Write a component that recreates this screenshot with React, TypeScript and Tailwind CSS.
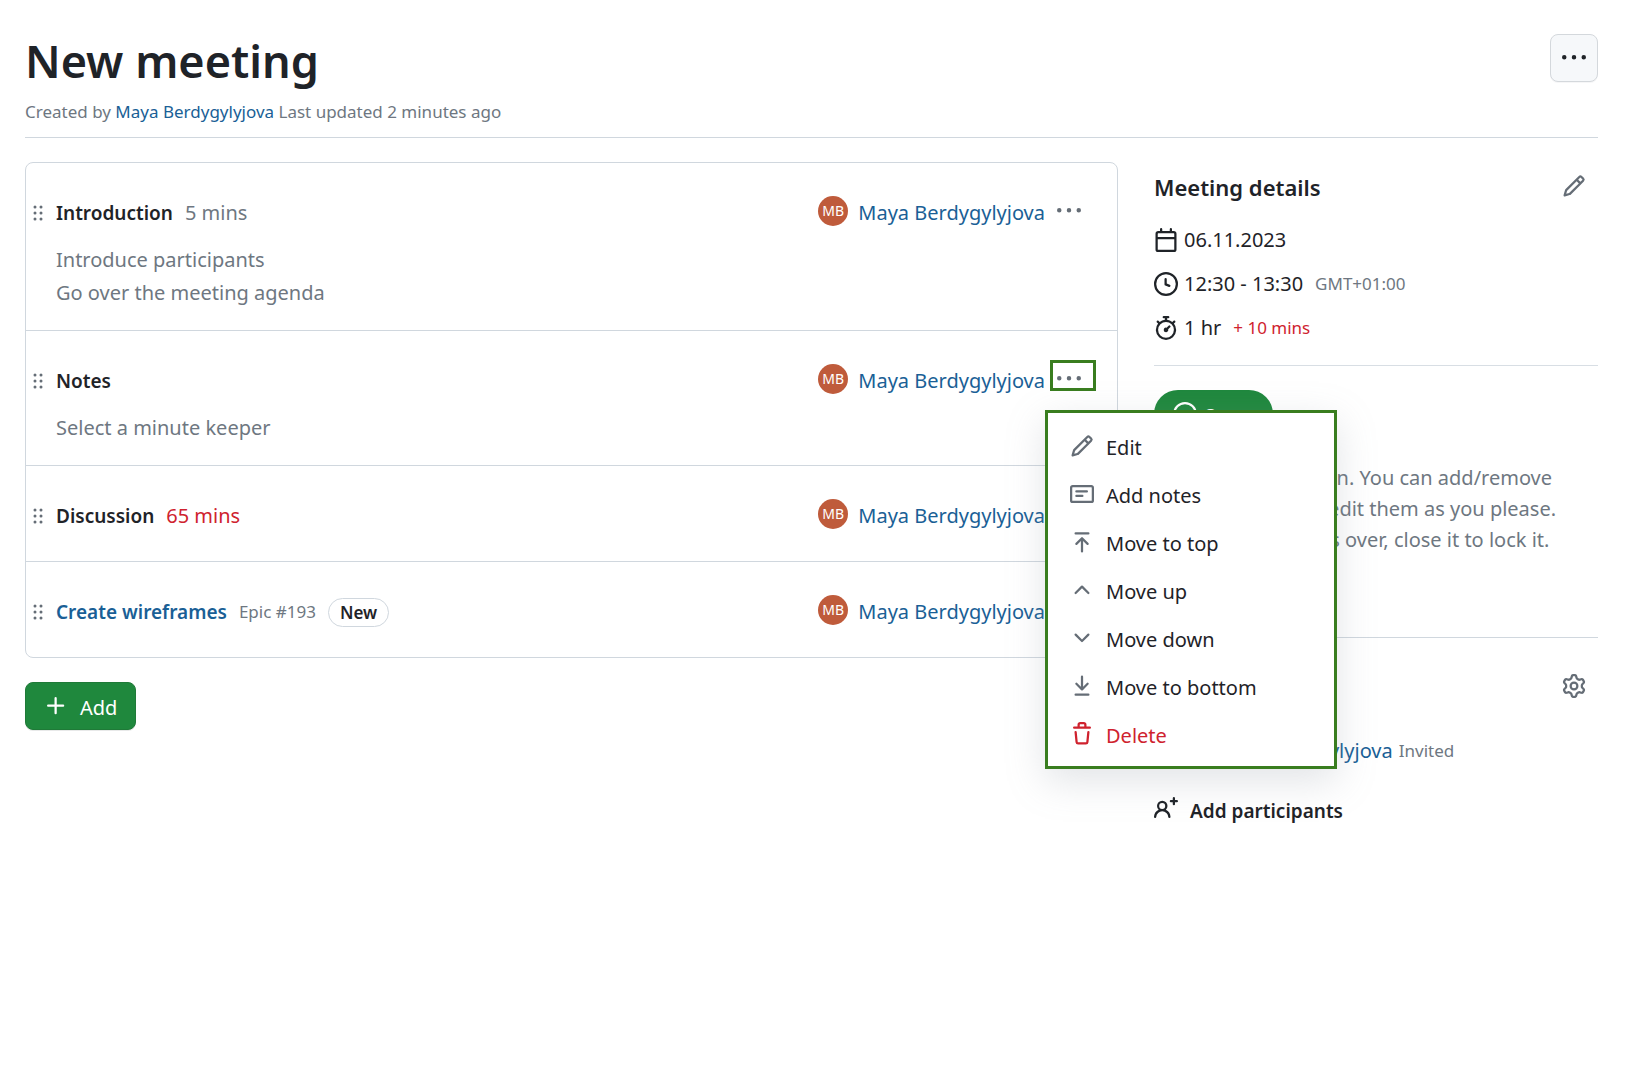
import React from "react";

const PATHS = {
  pencil:
    "M11.013 1.427a1.75 1.75 0 0 1 2.474 0l1.086 1.086a1.75 1.75 0 0 1 0 2.474l-8.61 8.61c-.21.21-.47.364-.756.445l-3.251.93a.75.75 0 0 1-.927-.928l.929-3.25c.081-.286.235-.547.445-.758l8.61-8.61Zm.176 4.823L9.75 4.81l-6.286 6.287a.253.253 0 0 0-.064.108l-.558 1.953 1.953-.558a.253.253 0 0 0 .108-.064Zm1.238-3.763a.25.25 0 0 0-.354 0L10.811 3.75l1.439 1.44 1.263-1.263a.25.25 0 0 0 0-.354Z",
  note: "M0 3.75C0 2.784.784 2 1.75 2h12.5c.966 0 1.75.784 1.75 1.75v8.5A1.75 1.75 0 0 1 14.25 14H1.75A1.75 1.75 0 0 1 0 12.25Zm1.75-.25a.25.25 0 0 0-.25.25v8.5c0 .138.112.25.25.25h12.5a.25.25 0 0 0 .25-.25v-8.5a.25.25 0 0 0-.25-.25ZM3.5 6.25a.75.75 0 0 1 .75-.75h7a.75.75 0 0 1 0 1.5h-7a.75.75 0 0 1-.75-.75Zm.75 2.25h4a.75.75 0 0 1 0 1.5h-4a.75.75 0 0 1 0-1.5Z",
  moveTop:
    "M3 2.25a.75.75 0 0 1 .75-.75h8.5a.75.75 0 0 1 0 1.5h-8.5A.75.75 0 0 1 3 2.25Zm5.53 2.72 3.75 3.75a.749.749 0 1 1-1.06 1.06L8.75 7.311v6.939a.75.75 0 0 1-1.5 0V7.311L4.78 9.78a.749.749 0 1 1-1.06-1.06l3.75-3.75a.749.749 0 0 1 1.06 0Z",
  moveBottom:
    "M7.47 10.78a.749.749 0 0 0 1.06 0l3.75-3.75a.749.749 0 1 0-1.06-1.06L8.75 8.439V1.75a.75.75 0 0 0-1.5 0v6.689L4.78 5.97a.749.749 0 1 0-1.06 1.06l3.75 3.75ZM3.75 13a.75.75 0 0 0 0 1.5h8.5a.75.75 0 0 0 0-1.5h-8.5Z",
  up: "M3.22 10.53a.749.749 0 0 1 0-1.06l4.25-4.25a.749.749 0 0 1 1.06 0l4.25 4.25a.749.749 0 1 1-1.06 1.06L8 6.811 4.28 10.53a.749.749 0 0 1-1.06 0Z",
  down: "M12.78 5.22a.749.749 0 0 1 0 1.06l-4.25 4.25a.749.749 0 0 1-1.06 0L3.22 6.28a.749.749 0 1 1 1.06-1.06L8 8.939l3.72-3.719a.749.749 0 0 1 1.06 0Z",
  trash:
    "M11 1.75V3h2.25a.75.75 0 0 1 0 1.5H2.75a.75.75 0 0 1 0-1.5H5V1.75C5 .784 5.784 0 6.75 0h2.5C10.216 0 11 .784 11 1.75ZM4.496 6.675l.66 6.6a.25.25 0 0 0 .249.225h5.19a.25.25 0 0 0 .249-.225l.66-6.6a.75.75 0 0 1 1.492.149l-.66 6.6A1.748 1.748 0 0 1 10.595 15h-5.19a1.75 1.75 0 0 1-1.741-1.575l-.66-6.6a.75.75 0 1 1 1.492-.15ZM6.5 1.75V3h3V1.75a.25.25 0 0 0-.25-.25h-2.5a.25.25 0 0 0-.25.25Z",
  kebab:
    "M8 9a1.5 1.5 0 1 0 0-3 1.5 1.5 0 0 0 0 3ZM1.5 9a1.5 1.5 0 1 0 0-3 1.5 1.5 0 0 0 0 3Zm13 0a1.5 1.5 0 1 0 0-3 1.5 1.5 0 0 0 0 3Z",
  grabber:
    "M10 13a1 1 0 1 1 0-2 1 1 0 0 1 0 2Zm0-4a1 1 0 1 1 0-2 1 1 0 0 1 0 2Zm-4 4a1 1 0 1 1 0-2 1 1 0 0 1 0 2Zm5-9a1 1 0 1 1-2 0 1 1 0 0 1 2 0ZM7 8a1 1 0 1 1-2 0 1 1 0 0 1 2 0ZM6 5a1 1 0 1 1 0-2 1 1 0 0 1 0 2Z",
  gear: "M8 0a8.2 8.2 0 0 1 .701.031C9.444.095 9.99.645 10.16 1.29l.288 1.107c.018.066.079.158.212.224.231.114.454.243.668.386.123.082.233.09.299.071l1.103-.303c.644-.176 1.392.021 1.82.63.27.385.506.792.704 1.218.315.675.111 1.422-.364 1.891l-.814.806c-.049.048-.098.147-.088.294.016.257.016.515 0 .772-.01.147.038.246.088.294l.814.806c.475.469.679 1.216.364 1.891a7.977 7.977 0 0 1-.704 1.217c-.428.61-1.176.807-1.82.63l-1.102-.302c-.067-.019-.177-.011-.3.071a5.909 5.909 0 0 1-.668.386c-.133.066-.194.158-.211.224l-.29 1.106c-.168.646-.715 1.196-1.458 1.26a8.006 8.006 0 0 1-1.402 0c-.743-.064-1.289-.614-1.458-1.26l-.289-1.106c-.018-.066-.079-.158-.212-.224a5.738 5.738 0 0 1-.668-.386c-.123-.082-.233-.09-.299-.071l-1.103.303c-.644.176-1.392-.021-1.82-.63a8.12 8.12 0 0 1-.704-1.218c-.315-.675-.111-1.422.363-1.891l.815-.806c.05-.048.098-.147.088-.294a6.214 6.214 0 0 1 0-.772c.01-.147-.038-.246-.088-.294l-.815-.806C.635 6.045.431 5.298.746 4.623a7.92 7.92 0 0 1 .704-1.217c.428-.61 1.176-.807 1.82-.63l1.102.302c.067.019.177.011.3-.071.214-.143.437-.272.668-.386.133-.066.194-.158.211-.224l.29-1.106C6.009.645 6.556.095 7.299.03 7.53.01 7.764 0 8 0Zm-.571 1.525c-.036.003-.108.036-.137.146l-.289 1.105c-.147.561-.549.967-.998 1.189-.173.086-.34.183-.5.29-.417.278-.97.423-1.529.27l-1.103-.303c-.109-.03-.175.016-.195.045-.22.312-.412.644-.573.99-.014.031-.021.11.059.19l.815.806c.411.406.562.957.53 1.456a4.709 4.709 0 0 0 0 .582c.032.499-.119 1.05-.53 1.456l-.815.806c-.081.08-.073.159-.059.19.162.346.353.677.573.989.02.03.085.076.195.046l1.102-.303c.56-.153 1.113-.008 1.53.27.161.107.328.204.501.29.447.222.85.629.997 1.189l.289 1.105c.029.109.101.143.137.146a6.6 6.6 0 0 0 1.142 0c.036-.003.108-.036.137-.146l.289-1.105c.147-.561.549-.967.998-1.189.173-.086.34-.183.5-.29.417-.278.97-.423 1.529-.27l1.103.303c.109.029.175-.016.195-.045.22-.313.411-.644.573-.99.014-.031.021-.11-.059-.19l-.815-.806c-.411-.406-.562-.957-.53-1.456a4.709 4.709 0 0 0 0-.582c-.032-.499.119-1.05.53-1.456l.815-.806c.081-.08.073-.159.059-.19a6.464 6.464 0 0 0-.573-.989c-.02-.03-.085-.076-.195-.046l-1.102.303c-.56.153-1.113.008-1.53-.27a4.44 4.44 0 0 0-.501-.29c-.447-.222-.85-.629-.997-1.189l-.289-1.105c-.029-.11-.101-.143-.137-.146a6.6 6.6 0 0 0-1.142 0ZM11 8a3 3 0 1 1-6 0 3 3 0 0 1 6 0ZM9.5 8a1.5 1.5 0 1 0-3.001.001A1.5 1.5 0 0 0 9.5 8Z",
  calendar:
    "M4.75 0a.75.75 0 0 1 .75.75V2h5V.75a.75.75 0 0 1 1.5 0V2h1.25c.966 0 1.75.784 1.75 1.75v10.5A1.75 1.75 0 0 1 13.25 16H2.75A1.75 1.75 0 0 1 1 14.25V3.75C1 2.784 1.784 2 2.75 2H4V.75A.75.75 0 0 1 4.75 0ZM2.5 7.5v6.75c0 .138.112.25.25.25h10.5a.25.25 0 0 0 .25-.25V7.5Zm10.75-4H2.75a.25.25 0 0 0-.25.25V6h11V3.75a.25.25 0 0 0-.25-.25Z",
  clock:
    "M8 0a8 8 0 1 1 0 16A8 8 0 0 1 8 0ZM1.5 8a6.5 6.5 0 1 0 13 0 6.5 6.5 0 0 0-13 0Zm7-3.25v2.992l2.028.812a.75.75 0 0 1-.557 1.392l-2.5-1A.751.751 0 0 1 7 8.25v-3.5a.75.75 0 0 1 1.5 0Z",
  stopwatch:
    "M5.75.75A.75.75 0 0 1 6.5 0h3a.75.75 0 0 1 0 1.5h-.75v1l-.001.041a6.724 6.724 0 0 1 3.464 1.435l.007-.006.75-.75a.749.749 0 0 1 1.275.326.749.749 0 0 1-.215.734l-.75.75-.006.007a6.75 6.75 0 1 1-10.548 0L2.72 5.03l-.75-.75a.751.751 0 0 1 .018-1.042.751.751 0 0 1 1.042-.018l.75.75.007.006A6.72 6.72 0 0 1 7.25 2.541V1.5H6.5a.75.75 0 0 1-.75-.75ZM8 14.5a5.25 5.25 0 1 0-.001-10.501A5.25 5.25 0 0 0 8 14.5Zm.389-6.7 1.33-1.33a.75.75 0 1 1 1.061 1.06L9.45 8.861A1.503 1.503 0 0 1 8 10.75a1.499 1.499 0 1 1 .389-2.95Z",
  personAdd:
    "M7.9 8.548h-.001a5.528 5.528 0 0 1 3.1 4.659.75.75 0 1 1-1.498.086A4.01 4.01 0 0 0 5.5 9.5a4.01 4.01 0 0 0-4.001 3.793.75.75 0 1 1-1.498-.085 5.527 5.527 0 0 1 3.1-4.66 3.5 3.5 0 1 1 4.799 0ZM13.25 0a.75.75 0 0 1 .75.75V2h1.25a.75.75 0 0 1 0 1.5H14v1.25a.75.75 0 0 1-1.5 0V3.5h-1.25a.75.75 0 0 1 0-1.5h1.25V.75a.75.75 0 0 1 .75-.75ZM5.5 4a2 2 0 1 0-.001 3.999A2 2 0 0 0 5.5 4Z",
  plus: "M7.75 2a.75.75 0 0 1 .75.75V7h4.25a.75.75 0 0 1 0 1.5H8.5v4.25a.75.75 0 0 1-1.5 0V8.5H2.75a.75.75 0 0 1 0-1.5H7V2.75A.75.75 0 0 1 7.75 2Z",
  opened:
    "M8 9.5a1.5 1.5 0 1 0 0-3 1.5 1.5 0 0 0 0 3ZM8 0a8 8 0 1 1 0 16A8 8 0 0 1 8 0ZM1.5 8a6.5 6.5 0 1 0 13 0 6.5 6.5 0 0 0-13 0Z",
};

type IconName = keyof typeof PATHS;

function Icon({ name, className = "" }: { name: IconName; className?: string }) {
  return (
    <svg viewBox="0 0 16 16" fill="currentColor" aria-hidden="true" className={`size-6 shrink-0 ${className}`}>
      <path d={PATHS[name]} />
    </svg>
  );
}

const MENU: { icon: IconName; label: string; danger?: boolean }[] = [
  { icon: "pencil", label: "Edit" },
  { icon: "note", label: "Add notes" },
  { icon: "moveTop", label: "Move to top" },
  { icon: "up", label: "Move up" },
  { icon: "down", label: "Move down" },
  { icon: "moveBottom", label: "Move to bottom" },
  { icon: "trash", label: "Delete", danger: true },
];

function ActionMenu() {
  return (
    <div
      role="menu"
      className="absolute top-[55px] -left-[5px] z-10 w-[292px] border-3 border-[#397d1f] bg-white pt-[9px] pb-2 shadow-[0_12px_36px_rgba(140,149,159,0.25)]"
    >
      {MENU.map((item) => (
        <button
          key={item.label}
          type="button"
          role="menuitem"
          className={`flex h-12 w-full items-center gap-3 pl-[22px] text-left ${item.danger ? "text-[#cf222e]" : "text-[#1f2328]"}`}
        >
          <Icon name={item.icon} className={item.danger ? "" : "text-[#656d76]"} />
          <span className="pt-1">{item.label}</span>
        </button>
      ))}
    </div>
  );
}

function AgendaItem({
  title,
  children,
  notes = [],
  menuOpen = false,
}: {
  title: React.ReactNode;
  children?: React.ReactNode;
  notes?: string[];
  menuOpen?: boolean;
}) {
  return (
    <li className="border-b border-[#d0d7de] pt-6 last:border-b-0">
      <div className="flex h-12 items-center pr-[21px]">
        <div className="flex items-center pt-1">
          <Icon name="grabber" className="mr-1.5 text-[#656d76]" />
          <h3 className="mr-3 text-[19px] font-semibold">{title}</h3>
          {children}
        </div>
        <div className="ml-auto flex items-center">
          <span className="mr-2.5 flex size-[30px] items-center justify-center rounded-full bg-[#bf5b3b] text-sm text-white">
            MB
          </span>
          <a href="#maya" className="pt-1 text-[#1a5f96]">
            Maya Berdygylyjova
          </a>
          <div className="relative ml-[5px]">
            <button
              type="button"
              aria-label="Agenda item actions"
              className="flex h-12 w-[46px] items-center pl-[7px] text-[#656d76]"
            >
              <Icon name="kebab" />
            </button>
            {menuOpen && (
              <>
                <span className="pointer-events-none absolute inset-x-0 top-[5px] h-[31px] border-3 border-[#397d1f]" />
                <ActionMenu />
              </>
            )}
          </div>
        </div>
      </div>
      {notes.length > 0 ? (
        <div className="pt-2 pb-[21px] pl-[30px] leading-[33px] text-[#6e7781]">
          {notes.map((n) => (
            <p key={n}>{n}</p>
          ))}
        </div>
      ) : (
        <div className="h-[23px]" />
      )}
    </li>
  );
}

export default function App() {
  return (
    <div className="min-h-screen bg-white pt-[34px] pr-[29px] pl-[25px] font-['Noto_Sans',sans-serif] text-[20px] leading-8 text-[#1f2328]">
      <header className="border-b border-[#d0d7de] pb-2.5">
        <div className="flex items-start justify-between">
          <h1 className="text-[45px] leading-[53px] font-semibold">New meeting</h1>
          <button
            type="button"
            aria-label="More actions"
            className="flex size-12 items-center justify-center rounded-lg border border-[#d4d8dc] bg-[#f6f8fa] shadow-[0_1px_0_rgba(31,35,40,0.04)]"
          >
            <Icon name="kebab" />
          </button>
        </div>
        <p className="pt-[9px] text-[17px] leading-[31px] text-[#6e7781]">
          Created by{" "}
          <a href="#maya" className="text-[#1a5f96]">
            Maya Berdygylyjova
          </a>{" "}
          Last updated 2 minutes ago
        </p>
      </header>

      <div className="flex items-start gap-9 pt-6">
        <main className="min-w-0 flex-1">
          <ul className="rounded-lg border border-[#d0d7de]">
            <AgendaItem title="Introduction" notes={["Introduce participants", "Go over the meeting agenda"]}>
              <span className="text-[#6e7781]">5 mins</span>
            </AgendaItem>
            <AgendaItem title="Notes" notes={["Select a minute keeper"]} menuOpen />
            <AgendaItem title="Discussion">
              <span className="text-[#cf222e]">65 mins</span>
            </AgendaItem>
            <AgendaItem
              title={
                <a href="#wireframes" className="text-[#1a5f96]">
                  Create wireframes
                </a>
              }
            >
              <span className="mr-3 text-[17px] text-[#6e7781]">Epic #193</span>
              <span className="rounded-full border border-[#d0d7de] px-[11px] text-[17px] leading-[27px] font-semibold">
                New
              </span>
            </AgendaItem>
          </ul>
          <button
            type="button"
            className="mt-6 flex h-12 items-center gap-3 rounded-lg border border-[#1f7a38] bg-[#1f883d] px-[18px] text-white shadow-[0_1px_0_rgba(31,35,40,0.1)]"
          >
            <Icon name="plus" />
            <span className="pt-1">Add</span>
          </button>
        </main>

        <aside className="w-[444px] shrink-0">
          <section className="border-b border-[#d8dee4] pb-[21px]">
            <div className="flex h-12 items-center justify-between pr-3">
              <h2 className="pt-0.5 text-[22px] font-semibold">Meeting details</h2>
              <button type="button" aria-label="Edit meeting details" className="text-[#656d76]">
                <Icon name="pencil" />
              </button>
            </div>
            <div className="flex flex-col gap-3 pt-3.5">
              <p className="flex items-center gap-1.5">
                <Icon name="calendar" />
                06.11.2023
              </p>
              <p className="flex items-center gap-1.5">
                <Icon name="clock" />
                12:30 - 13:30
                <span className="ml-1.5 text-[17px] text-[#6e7781]">GMT+01:00</span>
              </p>
              <p className="flex items-center gap-1.5">
                <Icon name="stopwatch" />1 hr
                <span className="ml-1.5 text-[17px] text-[#cf222e]">+ 10 mins</span>
              </p>
            </div>
          </section>

          <section className="border-b border-[#d0d7de] pt-6 pb-[82px]">
            <span className="flex h-12 w-[119px] items-center justify-center gap-1.5 rounded-full bg-[#1f883d] text-white">
              <Icon name="opened" />
              <span className="pt-1">Open</span>
            </span>
            <p className="pt-6 leading-[31px] whitespace-nowrap text-[#6e7781]">
              This meeting is open. You can add/remove
              <br />
              agenda items and edit them as you please.
              <br />
              After the meeting is over, close it to lock it.
            </p>
          </section>

          <section aria-label="Participants" className="pt-6">
            <div className="flex h-12 items-center justify-end pr-3">
              <button type="button" aria-label="Manage participants" className="text-[#656d76]">
                <Icon name="gear" />
              </button>
            </div>
            <p className="flex items-center pt-[25px]">
              <span className="mr-[22px] flex size-[30px] items-center justify-center rounded-full bg-[#bf5b3b] text-sm text-white">
                MB
              </span>
              <a href="#maya" className="text-[#1a5f96]">
                Maya Berdygylyjova
              </a>
              <span className="ml-1.5 text-[17px] text-[#6e7781]">Invited</span>
            </p>
            <button type="button" className="mt-7 flex items-center gap-3 font-semibold">
              <Icon name="personAdd" className="mb-1" />
              <span className="text-[19px]">Add participants</span>
            </button>
          </section>
        </aside>
      </div>
    </div>
  );
}
